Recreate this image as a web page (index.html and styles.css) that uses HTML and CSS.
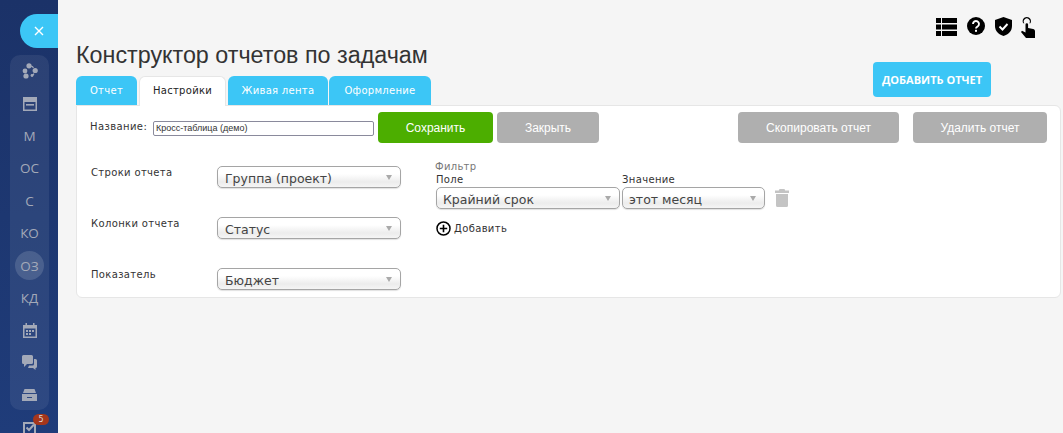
FILE: index.html
```html
<!DOCTYPE html>
<html lang="ru">
<head>
<meta charset="utf-8">
<title>Конструктор отчетов по задачам</title>
<link rel="stylesheet" href="styles.css">
</head>
<body>
<div class="app">
  <aside class="sidebar">
    <div class="toggle"><svg width="12" height="12" viewBox="0 0 12 12"><path d="M2 2l8 8M10 2l-8 8" stroke="#fff" stroke-width="1.4" fill="none"/></svg></div>
    <nav class="rail">
      <div class="rail-item"><svg width="16" height="16" viewBox="0 0 16 16" fill="#a3a9b8"><circle cx="7" cy="2.800" r="2.600"/><circle cx="13.200" cy="7.500" r="2.600"/><circle cx="3" cy="8" r="2.400"/><circle cx="4" cy="13" r="2.600"/><circle cx="10" cy="12.500" r="1.400"/><path d="M9.500 2.500a6.500 6.500 0 0 1 2.500 2l-1 .8a5 5 0 0 0-2-1.500zM12.500 11a6 6 0 0 1-2.500 2.500l-.6-1.200a5 5 0 0 0 2-2z"/></svg></div>
      <div class="rail-item"><svg width="14" height="14" viewBox="0 0 14 14"><path fill-rule="evenodd" fill="#a3a9b8" d="M0 0h14v14H0zM1.500 5v7.500h11V5z"/><rect x="3" y="7" width="8" height="1.600" fill="#a3a9b8"/></svg></div>
      <div class="rail-item">М</div>
      <div class="rail-item">ОС</div>
      <div class="rail-item">С</div>
      <div class="rail-item">КО</div>
      <div class="rail-item rail-current">ОЗ</div>
      <div class="rail-item">КД</div>
      <div class="rail-item"><svg width="14" height="15" viewBox="0 0 14 15"><path fill-rule="evenodd" fill="#a3a9b8" d="M0 2h2.500V0h1.500v2h6V0h1.500v2H14v13H0zM1.500 5.500v8h11v-8zM3 7h2v2H3zM6 7h2v2H6zM9 7h2v2H9zM3 10h2v2H3zM6 10h2v2H6z"/></svg></div>
      <div class="rail-item"><svg width="15" height="15" viewBox="0 0 15 15" fill="#a3a9b8"><path d="M0 1.500A1.500 1.500 0 0 1 1.500 0h8A1.500 1.500 0 0 1 11 1.500v6A1.500 1.500 0 0 1 9.500 9H5l-3 3V9H1.500A1.500 1.500 0 0 1 0 7.500z"/><path d="M12 4h1.500A1.500 1.500 0 0 1 15 5.500v6a1.500 1.500 0 0 1-1.500 1.500V15l-2.500-2H6l1-2.500h3.500A1.500 1.500 0 0 0 12 9z"/></svg></div>
      <div class="rail-item"><svg width="15" height="12" viewBox="0 0 15 12" fill="#a3a9b8"><path d="M2.500 0h10L14 4H1z"/><path fill-rule="evenodd" d="M0 5h15v7H0zM5 8v1h5V8z"/></svg></div>
    </nav>
    <div class="rail-task">
      <svg width="13" height="14" viewBox="0 0 13 14"><path fill-rule="evenodd" fill="#a3a9b8" d="M0 1h13v13H0zM2 3v9h9V3z"/><path d="M3.500 6.500l2.500 2.500 5-5.500" stroke="#a3a9b8" stroke-width="2" fill="none"/></svg>
      <span class="badge">5</span>
    </div>
  </aside>

  <main class="content">
    <div class="tools">
      <svg width="21" height="18" viewBox="0 0 21 18" fill="#000"><path d="M0 0h5v5H0zM6 0h15v5H6zM0 6.500h5v5H0zM6 6.500h15v5H6zM0 13h5v5H0zM6 13h15v5H6z"/></svg>
      <svg width="18" height="18" viewBox="0 0 18 18"><circle cx="9" cy="9" r="9" fill="#000"/><path d="M6 7a3 3 0 1 1 4.600 2.500C9.500 10.200 9 10.500 9 11.500" stroke="#fff" stroke-width="1.900" fill="none"/><rect x="8" y="12.800" width="2" height="2" fill="#fff"/></svg>
      <svg width="17" height="19" viewBox="0 0 17 19"><path d="M8.500 0L17 3v6c0 5-3.500 8.500-8.500 10C3.500 17.500 0 14 0 9V3z" fill="#000"/><path d="M4.500 9.500l3 3 5-5.500" stroke="#fff" stroke-width="1.900" fill="none"/></svg>
      <svg width="14" height="21" viewBox="0 0 14 21" fill="#000"><path d="M4.500 7.500a1.300 1.300 0 0 1 2.600 0V11l5 1c1.200.3 1.900 1 1.900 2.200V21H5L0 15l1-1.200 3.500 1.700z"/><path fill-rule="evenodd" d="M5.800 0a4.200 4.200 0 0 1 3.600 6.300H8.200a3 3 0 1 0-4.800 0H2.200A4.200 4.200 0 0 1 5.800 0z"/></svg>
    </div>

    <div class="head">
      <div class="head-left">
        <h1 class="title">Конструктор отчетов по задачам</h1>
        <div class="tabs">
          <a class="tab tab-report">Отчет</a>
          <a class="tab tab-active">Настройки</a>
          <a class="tab tab-live">Живая лента</a>
          <a class="tab tab-design">Оформление</a>
        </div>
      </div>
      <button class="add-btn">ДОБАВИТЬ ОТЧЕТ</button>
    </div>

    <section class="card">
      <div class="actions">
        <label class="name-label">Название:</label>
        <input class="name-input" value="Кросс-таблица (демо)">
        <button class="btn btn-save">Сохранить</button>
        <button class="btn btn-close">Закрыть</button>
        <span class="spacer"></span>
        <button class="btn btn-copy">Скопировать отчет</button>
        <button class="btn btn-delete">Удалить отчет</button>
      </div>

      <div class="settings">
        <div class="fields">
          <div class="field"><span class="field-label">Строки отчета</span><div class="select select-main">Группа (проект)<i class="arrow"></i></div></div>
          <div class="field"><span class="field-label">Колонки отчета</span><div class="select select-main">Статус<i class="arrow"></i></div></div>
          <div class="field"><span class="field-label">Показатель</span><div class="select select-main">Бюджет<i class="arrow"></i></div></div>
        </div>
        <div class="filter">
          <div class="filter-title">Фильтр</div>
          <div class="filter-row">
            <div class="filter-col"><span class="filter-label">Поле</span><div class="select select-field">Крайний срок<i class="arrow"></i></div></div>
            <div class="filter-col"><span class="filter-label">Значение</span><div class="select select-value">этот месяц<i class="arrow"></i></div></div>
            <svg class="trash" width="14" height="18" viewBox="0 0 14 18" fill="#c4c4c4"><path d="M4.500 0h5l.7 1.500H14V4H0V1.500h3.800zM1 5h12v11.500a1.500 1.500 0 0 1-1.500 1.500h-9A1.500 1.500 0 0 1 1 16.500z"/></svg>
          </div>
          <div class="add-row">
            <svg width="15" height="15" viewBox="0 0 15 15"><circle cx="7.500" cy="7.500" r="6.500" fill="none" stroke="#000" stroke-width="1.500"/><path d="M7.500 3.800v7.400M3.800 7.500h7.400" stroke="#000" stroke-width="1.600"/></svg>
            <span>Добавить</span>
          </div>
        </div>
      </div>
    </section>
  </main>
</div>
</body>
</html>
```
FILE: styles.css
```css
* { box-sizing: border-box; }
html, body { margin: 0; height: 100%; }
body { overflow: hidden; background: #f5f5f5; font-family: "DejaVu Sans", sans-serif; color: #333; }
.app { display: flex; height: 433px; overflow: hidden; }

.sidebar { flex: 0 0 58px; width: 58px; height: 433px; padding-top: 14px; background: linear-gradient(180deg, #1b3268 0%, #1f3c7a 100%); display: flex; flex-direction: column; align-items: flex-end; overflow: hidden; }
.toggle { flex: none; width: 38px; height: 34px; background: #3cc6f6; border-radius: 17px 0 0 17px; display: flex; align-items: center; justify-content: center; }
.rail { flex: none; align-self: flex-start; margin: 7px 0 0 10px; width: 39px; height: 355px; padding: 0; background: rgba(255,255,255,.07); border-radius: 10px; display: flex; flex-direction: column; align-items: center; }
.rail-item { width: 29px; height: 32.400px; flex: none; display: flex; align-items: center; justify-content: center; font-family: "Open Sans", "Noto Sans", sans-serif; font-size: 13.500px; color: #a3a9b8; }
.rail-current { height: 29px; margin: 1.700px 0; border-radius: 50%; background: rgba(255,255,255,.14); }
.rail-task { flex: none; position: relative; align-self: flex-start; margin: 10px 0 0 23px; height: 16px; }
.badge { position: absolute; left: 10px; top: -6px; width: 16px; height: 11px; border-radius: 6px; background: #a5361c; color: #ddd; font-size: 8px; line-height: 11px; text-align: center; }

.content { flex: 1; min-width: 0; padding: 0 2px 0 18px; }
.tools { height: 17px; padding: 17px 26px 0 0; display: flex; justify-content: flex-end; gap: 10px; align-items: flex-start; }
.tools svg:nth-child(1) { margin-top: 1px; }
.tools svg:nth-child(4) { margin-left: -1px; }
.head { display: flex; justify-content: space-between; align-items: flex-start; padding: 0 70px 0 0; }
.head-left { padding-top: 24px; }
.title { margin: 0; font: 400 23.300px/29px "Liberation Sans", sans-serif; color: #333; white-space: nowrap; }
.tabs { display: flex; gap: 1px; margin-top: 6px; position: relative; z-index: 1; margin-bottom: -1px; }
.tab { height: 29px; background: #3cc6f6; color: #fff; border-radius: 6px 6px 0 0; font-size: 10px; line-height: 30px; text-align: center; letter-spacing: .3px; }
.tab-report { width: 61px; }
.tab-active { width: 87px; margin-left: 1px; height: 30px; background: #fff; color: #222; border: 1px solid #e6e6e6; border-bottom: 0; line-height: 28px; }
.tab-live { width: 100px; margin-left: 1px; }
.tab-design { width: 102px; }
.add-btn { margin-top: 45px; width: 118px; height: 35px; border: 0; border-radius: 4px; background: #3cc6f6; color: #fff; font: 700 11px "Open Sans", sans-serif; padding: 0; }

.card { height: 193px; margin-top: 0; background: #fff; border: 1px solid #e6e6e6; border-radius: 0 6px 6px 6px; padding: 6px 0 0 13px; }
.actions { display: flex; align-items: center; height: 31px; padding-right: 13px; }
.name-label { font-size: 10px; color: #333; width: 63px; margin-top: -3px; letter-spacing: .4px; }
.name-input { width: 221px; height: 15px; padding: 0 2px; border: 1px solid #8a8a9c; border-radius: 2px; font: 9px "Liberation Sans", sans-serif; color: #333; margin-right: 4px; margin-top: 1px; }
.btn { height: 31px; border: 0; border-radius: 4px; color: #fff; font: 12px "Liberation Sans", sans-serif; padding: 0; background: #afafaf; }
.btn-save { width: 115px; background: #4cae00; margin-right: 4px; }
.btn-close { width: 102px; }
.spacer { flex: 1; }
.btn-copy { width: 161px; margin-right: 14px; }
.btn-delete { width: 134px; }

.settings { display: flex; padding-top: 16px; }
.fields { width: 346px; padding-top: 7px; }
.field { display: flex; align-items: flex-start; height: 51px; }
.field-label { width: 127px; padding: 1px 0 0 1px; font-size: 10px; color: #333; letter-spacing: .35px; }
.select { position: relative; height: 22px; border: 1px solid #a5a5a5; border-radius: 5px; background: linear-gradient(180deg, #fff 0%, #fff 35%, #ececec 75%, #f5f5f5 100%); box-shadow: 0 1px 1px rgba(0,0,0,.12); font-size: 12.500px; line-height: 23px; color: #444; padding-left: 7px; white-space: nowrap; }
.arrow { position: absolute; right: 8px; top: 8px; width: 0; height: 0; border: 3.500px solid transparent; border-top: 5px solid #aaa; border-bottom: 0; }
.select-main { width: 184px; }
.select-field { width: 184px; padding-left: 6px; }
.select-value { width: 143px; padding-left: 6px; }
.filter { padding-top: 2px; }
.filter-title { font-size: 10px; line-height: 11px; color: #777; letter-spacing: .3px; margin-left: -1px; }
.filter-row { display: flex; align-items: flex-end; margin-top: 0; }
.filter-col { display: flex; flex-direction: column; margin-right: 2px; }
.filter-label { font-size: 10px; line-height: 15px; color: #333; letter-spacing: .35px; }
.trash { margin: 0 0 2px 8px; }
.add-row { display: flex; align-items: center; gap: 3px; margin-top: 12px; font-size: 10px; color: #333; letter-spacing: .35px; }
```
